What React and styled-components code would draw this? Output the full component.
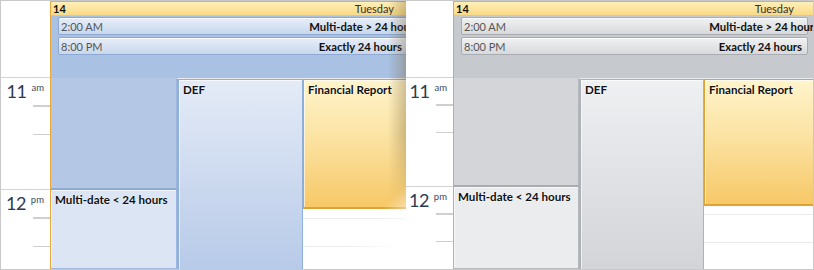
import React from 'react';
import styled, { createGlobalStyle, ThemeProvider } from 'styled-components';

const GlobalStyle = createGlobalStyle`
  html, body { margin: 0; padding: 0; background: #fff; }
  body { font-family: Lato, "Liberation Sans", sans-serif; }
`;

const blue = {
  allDayBg: '#a9c1e3',
  barTop: '#e8eef8',
  barBottom: '#c7d7ee',
  barBorder: '#8eaad3',
  blank: '#b4c8e6',
  blankBorder: '#8eabd6',
  multi: '#dce5f3',
  multiBorder: '#9db7de',
  defTop: '#e4ebf7',
  defBottom: '#b7cae8',
  defBorder: '#8fb0dc',
};

const silver = {
  allDayBg: '#c6c9ce',
  barTop: '#f0f1f2',
  barBottom: '#d7d9dc',
  barBorder: '#a9acb1',
  blank: '#d3d5d9',
  blankBorder: '#a8abb0',
  multi: '#ebeced',
  multiBorder: '#b5b8bc',
  defTop: '#eff0f2',
  defBottom: '#d2d4d8',
  defBorder: '#aeb1b6',
};

const Frame = styled.div`
  width: 814px;
  height: 270px;
  box-sizing: border-box;
  border: 1px solid #c9c9c9;
  display: flex;
  overflow: hidden;
  background: #fff;
`;

const Panel = styled.div`
  position: relative;
  flex: none;
  width: ${(p) => p.$width}px;
  height: 100%;
  overflow: hidden;
  display: flex;
`;

const TimeColumn = styled.div`
  flex: none;
  width: ${(p) => p.$width}px;
  display: flex;
  flex-direction: column;
  background: #fff;
`;

const TimeSpacer = styled.div`
  height: 76px;
  flex: none;
`;

const HourBlock = styled.div`
  box-sizing: border-box;
  height: ${(p) => p.$slot * 4}px;
  flex: none;
  border-top: 1px solid #d3d3d3;
  display: flex;
  flex-direction: column;
`;

const Slot = styled.div`
  flex: 1;
  display: flex;
  flex-direction: column;
  justify-content: space-between;
  align-items: flex-end;
`;

const Tick = styled.div`
  width: 17px;
  height: 1px;
  background: #cfcfcf;
`;

const HourLabel = styled.div`
  align-self: stretch;
  display: flex;
  justify-content: flex-end;
  align-items: flex-start;
  padding: 5px 6px 0 0;
  color: #2d3b4f;
`;

const HourNum = styled.span`
  font-size: 18px;
  line-height: 17px;
  letter-spacing: -0.5px;
`;

const HourSuffix = styled.span`
  font-size: 9.5px;
  line-height: 9px;
  margin-left: 5px;
  color: #3d4b60;
`;

const DayArea = styled.div`
  flex: none;
  width: ${(p) => p.$col * 3}px;
  border-left: 1px solid #eaa83c;
  display: flex;
  flex-direction: column;
`;

const DayHeader = styled.div`
  box-sizing: border-box;
  height: 15px;
  flex: none;
  border-top: 1px solid #eeac3c;
  border-bottom: 1px solid #f3c466;
  background: linear-gradient(#fff0b9, #f9d985);
  display: flex;
  align-items: center;
  justify-content: space-between;
  padding: 0 35px 0 2px;
  font-size: 11px;
  color: #333;
`;

const DayNum = styled.span`
  font-weight: 700;
  color: #111;
`;

const AllDay = styled.div`
  height: 61px;
  flex: none;
  background: ${(p) => p.theme.allDayBg};
  display: flex;
  flex-direction: column;
  gap: 2px;
  padding: 1px 21px 0 7px;
`;

const Bar = styled.div`
  box-sizing: border-box;
  height: 18px;
  border: 1px solid ${(p) => p.theme.barBorder};
  border-radius: 2px;
  background: linear-gradient(${(p) => p.theme.barTop}, ${(p) => p.theme.barBottom});
  box-shadow: inset 0 1px 0 rgba(255, 255, 255, 0.7);
  display: flex;
  align-items: center;
  justify-content: space-between;
  padding: 0 5px 0 2px;
  font-size: 11px;
  white-space: nowrap;
`;

const BarTime = styled.span`
  color: #555;
`;

const BarTitle = styled.span`
  font-weight: 700;
  font-size: 11.3px;
  color: #111;
  margin-right: ${(p) => (p.$trailing ? -17 : 0)}px;
`;

const Timed = styled.div`
  flex: 1;
  display: grid;
  grid-template-columns: repeat(3, ${(p) => p.$col}px);
  min-height: 0;
`;

const Column = styled.div`
  display: flex;
  flex-direction: column;
  min-height: 0;
  background-color: #fff;
  background-image: repeating-linear-gradient(
    to bottom,
    #e9ebee 0,
    #e9ebee 1px,
    transparent 1px,
    transparent ${(p) => p.$slot}px
  );
`;

const Blank = styled.div`
  box-sizing: border-box;
  flex: none;
  height: ${(p) => p.$height}px;
  background: ${(p) => p.theme.blank};
  border-bottom: 2px solid ${(p) => p.theme.blankBorder};
  border-right: 1px solid ${(p) => p.theme.multiBorder};
`;

const Event = styled.div`
  box-sizing: border-box;
  flex: ${(p) => (p.$height ? 'none' : '1')};
  height: ${(p) => (p.$height ? `${p.$height}px` : 'auto')};
  margin-top: ${(p) => (p.$offset ? 1 : 0)}px;
  padding: 3px 4px;
  font-size: 11.6px;
  font-weight: 700;
  color: #111;
  white-space: nowrap;
  background: ${(p) => {
    if (p.$kind === 'report') return 'linear-gradient(#fff4cb, #fbe3a3 45%, #f7c867)';
    if (p.$kind === 'def')
      return `linear-gradient(${p.theme.defTop}, ${p.theme.defBottom})`;
    return p.theme.multi;
  }};
  border: 1px solid
    ${(p) => {
      if (p.$kind === 'report') return '#e0a232';
      if (p.$kind === 'def') return p.theme.defBorder;
      return p.theme.multiBorder;
    }};
  border-top-width: ${(p) => (p.$kind === 'multi' ? 0 : 1)}px;
  border-bottom-width: ${(p) => (p.$kind === 'report' ? 2 : p.$kind === 'def' ? 0 : 1)}px;
  border-left-width: ${(p) => (p.$kind === 'multi' ? 0 : p.$kind === 'def' ? 2 : 1)}px;
  box-shadow: inset 1px 1px 0 rgba(255, 255, 255, 0.6);
  text-shadow: 0 0 2px rgba(255, 255, 255, 0.8);
`;

const Shade = styled.div`
  position: absolute;
  top: 0;
  right: 0;
  bottom: 0;
  width: 18px;
  pointer-events: none;
  background: linear-gradient(to right, rgba(110, 85, 40, 0), rgba(110, 85, 40, 0.32));
  -webkit-mask-image: linear-gradient(to bottom, #000 0%, #000 50%, transparent 80%);
  mask-image: linear-gradient(to bottom, #000 0%, #000 50%, transparent 80%);
`;

const Fade = styled.div`
  position: absolute;
  right: 0;
  bottom: 0;
  width: 120px;
  height: 100%;
  pointer-events: none;
  background: linear-gradient(
    135deg,
    rgba(255, 255, 255, 0) 78%,
    rgba(255, 255, 255, 0.85) 90%,
    #fff 96%
  );
`;

function TimeCol({ width, slot }) {
  const hours = [
    ['11', 'am'],
    ['12', 'pm'],
  ];
  return (
    <TimeColumn $width={width}>
      <TimeSpacer />
      {hours.map(([n, s]) => (
        <HourBlock key={n} $slot={slot}>
          <Slot>
            <HourLabel>
              <HourNum>{n}</HourNum>
              <HourSuffix>{s}</HourSuffix>
            </HourLabel>
            <Tick />
          </Slot>
          <Slot>
            <Tick />
          </Slot>
          <Slot>
            <Tick />
          </Slot>
          <Slot />
        </HourBlock>
      ))}
    </TimeColumn>
  );
}

function CalendarPanel({ theme, width, timeWidth, col, slot, curl }) {
  return (
    <ThemeProvider theme={theme}>
      <Panel $width={width}>
        <TimeCol width={timeWidth} slot={slot} />
        <DayArea $col={col}>
          <DayHeader>
            <DayNum>14</DayNum>
            <span>Tuesday</span>
          </DayHeader>
          <AllDay>
            <Bar>
              <BarTime>2:00 AM</BarTime>
              <BarTitle $trailing>Multi-date &gt; 24 hours</BarTitle>
            </Bar>
            <Bar>
              <BarTime>8:00 PM</BarTime>
              <BarTitle>Exactly 24 hours</BarTitle>
            </Bar>
          </AllDay>
          <Timed $col={col}>
            <Column $slot={slot}>
              <Blank $height={slot * 4} />
              <Event $kind="multi">Multi-date &lt; 24 hours</Event>
            </Column>
            <Column $slot={slot}>
              <Event $kind="def" $offset>DEF</Event>
            </Column>
            <Column $slot={slot}>
              <Event $kind="report" $offset $height={slot * 4.65}>
                Financial Report
              </Event>
            </Column>
          </Timed>
        </DayArea>
        {curl && (
          <>
            <Shade />
            <Fade />
          </>
        )}
      </Panel>
    </ThemeProvider>
  );
}

export default function App() {
  return (
    <>
      <GlobalStyle />
      <Frame>
        <CalendarPanel theme={blue} width={405} timeWidth={49} col={126} slot={28} curl />
        <CalendarPanel theme={silver} width={407} timeWidth={47} col={125} slot={27.25} />
      </Frame>
    </>
  );
}
